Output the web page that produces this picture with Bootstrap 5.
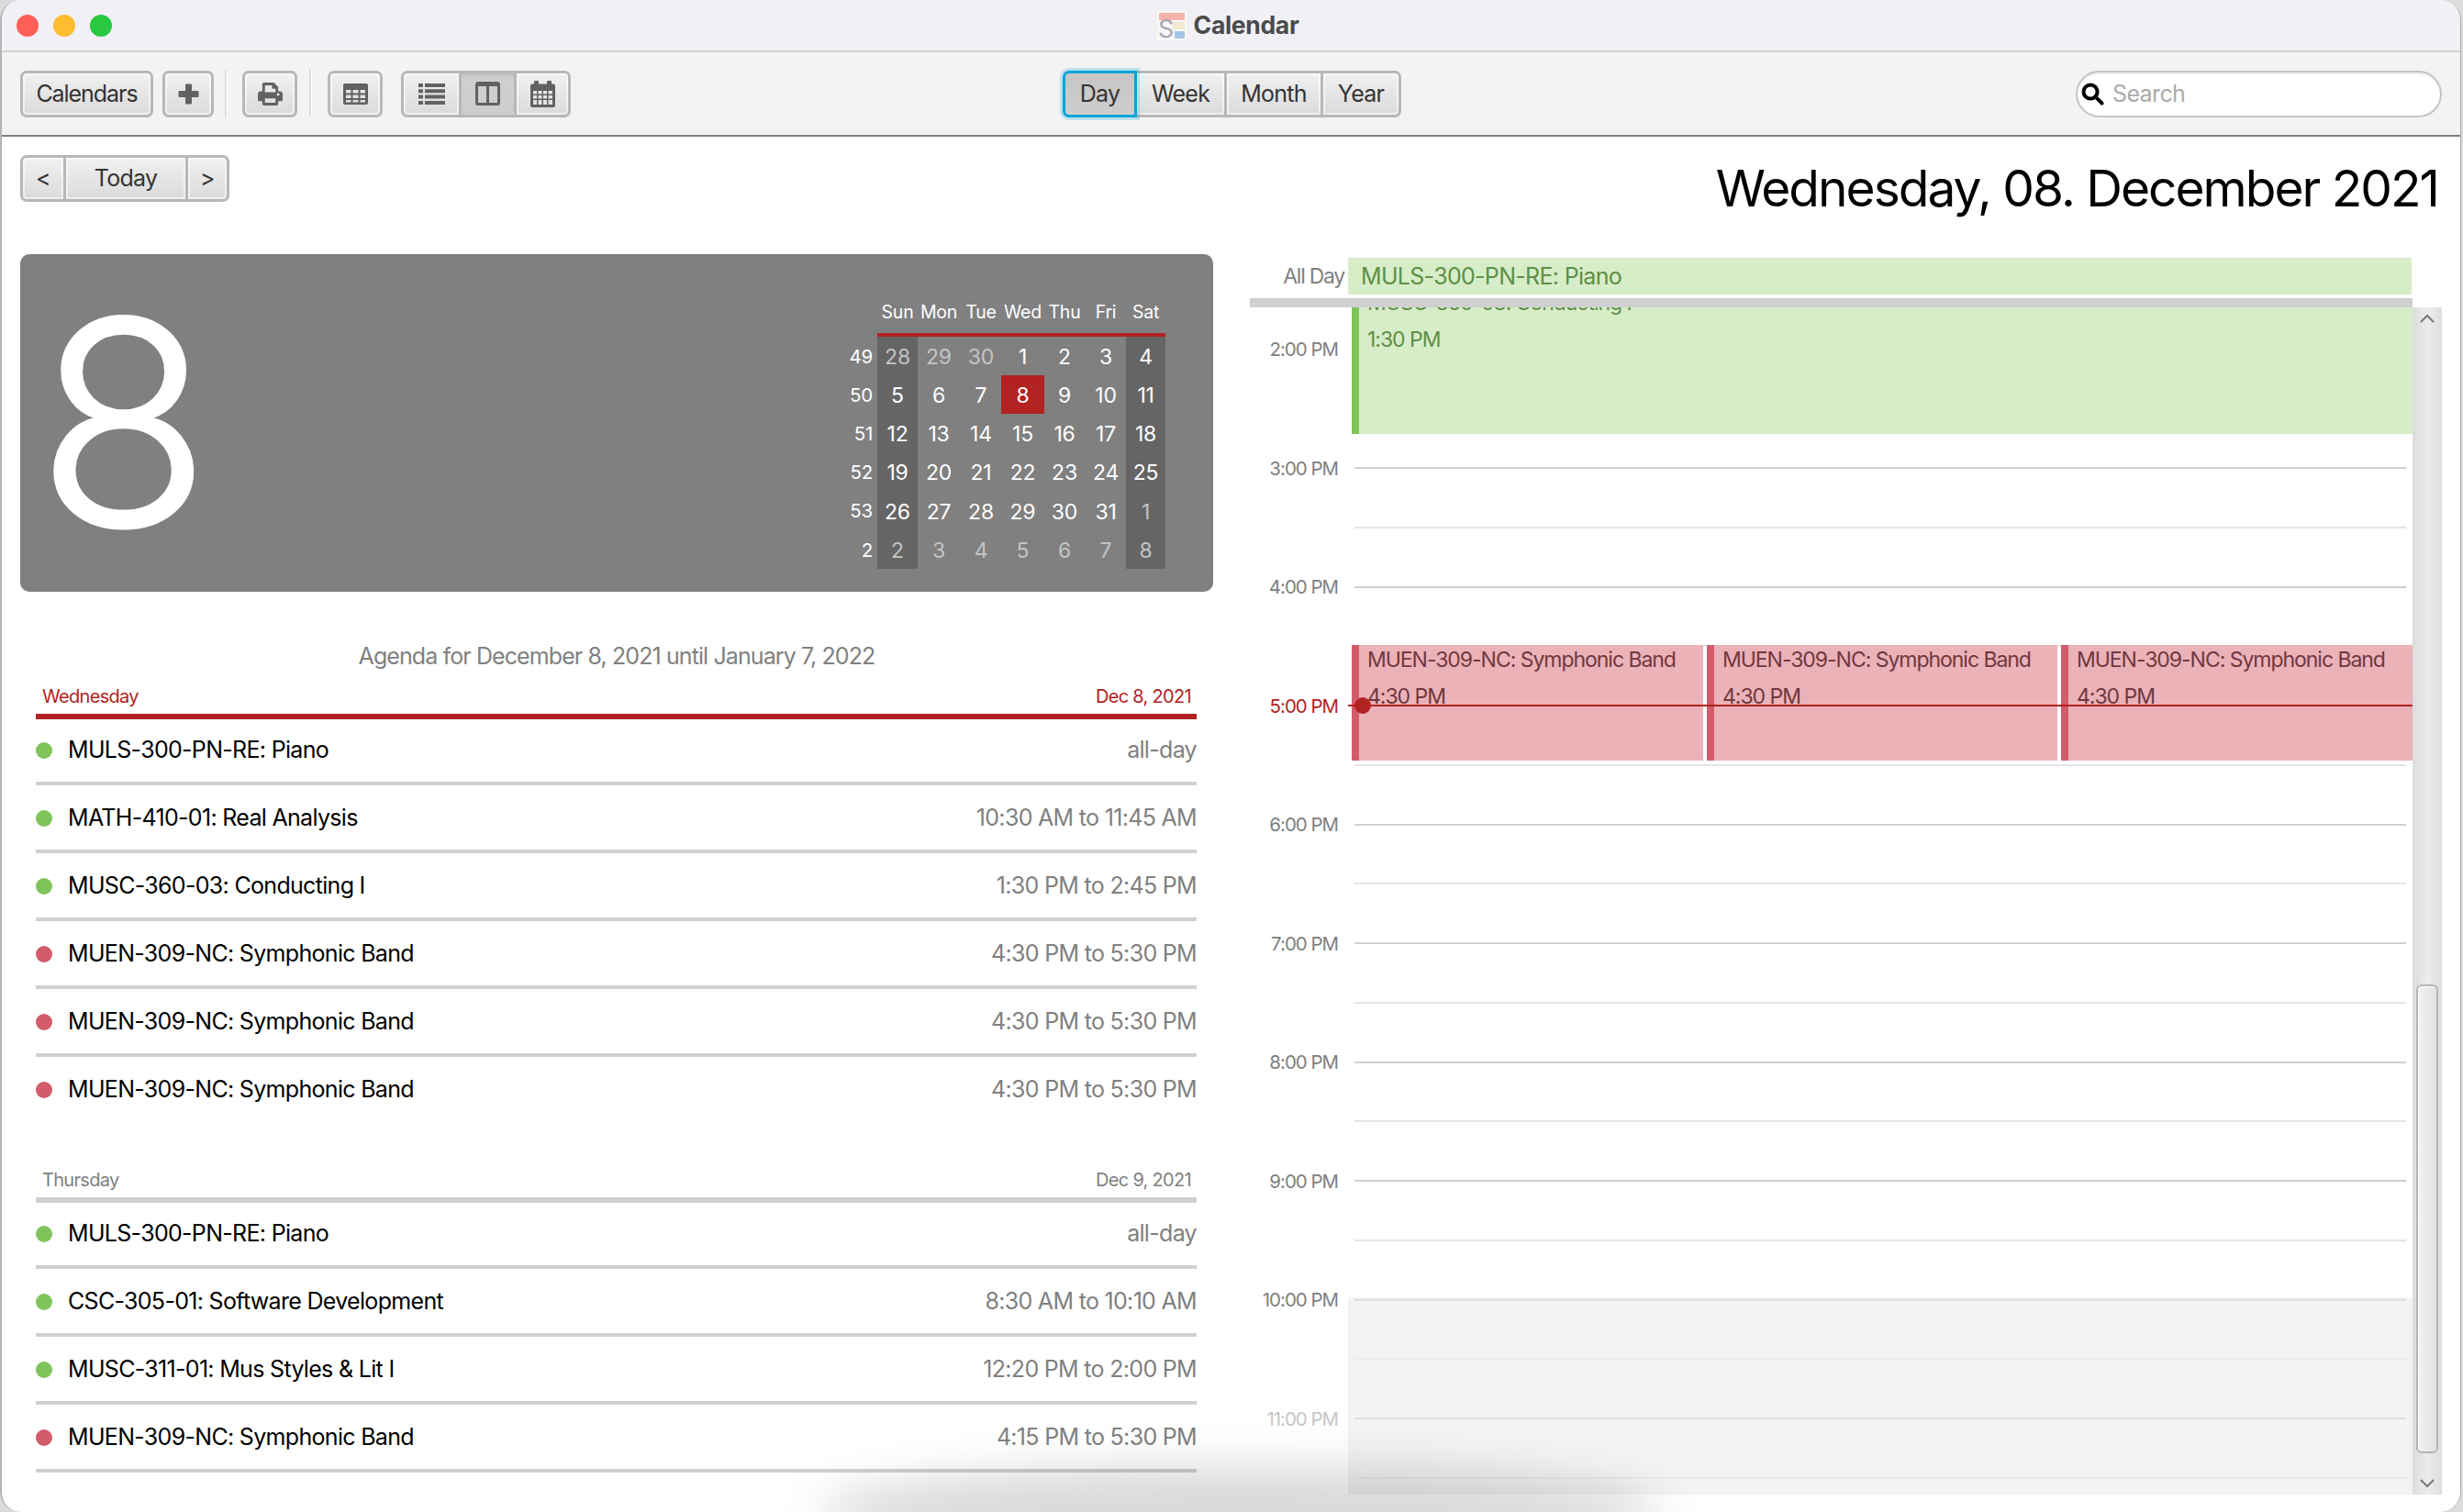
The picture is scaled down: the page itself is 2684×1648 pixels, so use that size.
<!DOCTYPE html>
<html lang="en">
<head>
  <meta charset="UTF-8" />
  <title>Calendar</title>
  <link href="https://cdn.jsdelivr.net/npm/bootstrap@5.3.3/dist/css/bootstrap.min.css" rel="stylesheet"/>
  <style>
    html, body { height: 100%; }
    body {
      background-color: #dcdcdc;
      font-family: Inter, "Liberation Sans", sans-serif;
      overflow: hidden;
      letter-spacing: -0.043em;
    }
    .app-window {
      height: 1648px;
      width: 2682px;
      background: #fff;
      border-left: 2px solid #b4b4b4;
      border-right: 1px solid #a8a8a8;
      border-radius: 22px;
      overflow: hidden;
      position: relative;
    }
    .title-bar {
      height: 57px;
      background: #f1f0f5;
      border-bottom: 2px solid #d0d0d0;
      padding-right: 7px;
      position: relative;
    }
    .traffic { width: 24px; height: 24px; border-radius: 50%; position: absolute; top: 16px; }
    .title-text { font-size: 26.5px; font-weight: 700; color: #4a4a4a; letter-spacing: -0.012em; }
    .tool-bar {
      height: 92px;
      background: #f3f3f3;
      border-bottom: 2px solid #808080;
      padding: 0 20px;
    }
    .side-area { flex: 1 1 0; }
    .view-group { margin-left: 2px; }
    .tb-btn {
      height: 51px;
      padding: 0;
      font-size: 25px;
      line-height: 1;
      color: #333;
      letter-spacing: -0.03em;
      border: 3px solid #b8b8b8;
      border-radius: 7px;
      background: linear-gradient(#f1f1f1, #dadada);
      box-shadow: inset 0 0 0 2px rgba(255,255,255,.55);
      display: inline-flex;
      align-items: center;
      justify-content: center;
    }
    .tb-btn:hover { color: #333; border-color: #b8b8b8; background: linear-gradient(#f1f1f1, #dadada); }
    .tb-btn.active {
      color: #333;
      border-color: #b8b8b8;
      background: linear-gradient(#bdbdbd, #cfcfcf 12%, #cdcdcd);
      box-shadow: none;
    }
    .btn-group { --bs-border-width: 3px; }
    .tb-sep { width: 2px; height: 52px; background: #dedede; box-shadow: 1px 0 0 #fff; }
    .tb-btn svg { fill: #616161; display: block; }
    .day-btn.active {
      border-color: #00a5d9 !important;
      background: linear-gradient(#c6c6c6, #cdcdcd);
      box-shadow: 0 0 0 3px rgba(0,165,217,.22);
      position: relative;
      z-index: 2;
    }
    .search-box { width: 399px; height: 51px; position: relative; }
    .search-input {
      width: 100%;
      height: 100%;
      border-radius: 26px;
      border: 2px solid #c6c6c6;
      padding: 0 0 0 38px;
      font-size: 25px;
      letter-spacing: -0.025em;
      box-shadow: inset 0 2px 2px rgba(0,0,0,.07);
    }
    .search-input::placeholder { color: #aaa; opacity: 1; }
    .search-icon { position: absolute; left: 6px; top: 13px; }
    .head-row { height: 128px; padding: 20px 24px 0 20px; }
    .head-title { font-size: 55px; line-height: 66px; color: #000; margin-top: 3px; letter-spacing: -0.036em; }
    .left-col { width: 1300px; margin-left: 20px; }
    .right-col { width: 1299px; margin-left: 40px; }

    .day-card {
      height: 368px;
      background: #808080;
      border-radius: 10px;
      color: #fff;
      padding: 46px 52px 0 0;
    }
    .big-day { font-size: 310px; font-weight: 300; -webkit-text-stroke: 3px #fff; line-height: 368px; margin: -46px 0 0 18px; letter-spacing: 0; }
    .mini-cal {
      display: grid;
      grid-template-columns: 51px 44px 46px 46px 45px 46px 44px 43px;
      grid-template-rows: 44px;
      grid-auto-rows: 42.2px;
      font-size: 23px;
      letter-spacing: -0.01em;
      text-align: center;
    }
    .mc-head { font-size: 19.5px; border-bottom: 4px solid #b22222; line-height: 34px; height: 44px; }
    .mc-blank { border: 0; }
    .mc-cell { display: flex; align-items: center; justify-content: center; padding-top: 2px; }
    .mc-wk { justify-content: flex-end; padding-right: 5px; font-size: 20.5px; }
    .mc-end { background: #656565; }
    .mc-off { color: #c4c4c4; }
    .mc-today { background: #b22222; margin: 0 -1px; }

    .agenda-title { font-size: 25px; letter-spacing: -0.036em; color: #808080; text-align: center; line-height: 30px; margin-top: 55px; height: 40px; }
    .agenda { padding: 0 18px 0 17px; }
    .day-head { height: 38px; font-size: 20px; padding: 0 6px 0 7px; }
    .day-head + .day-rule { height: 6px; margin-bottom: -2px; }
    .rule-red { background: #b22222; }
    .rule-grey { background: #d0d0d0; }
    .head-red { color: #b22222; }
    .head-grey { color: #808080; }
    .agenda-group + .agenda-group { margin-top: 45px; }
    .agenda-row {
      height: 74px;
      font-size: 25px;
      color: #000;
      border-bottom: 4px solid #d0d0d0;
      padding-top: 2px;
    }
    .agenda-row.no-rule { border-bottom: 0; height: 70px; }
    .agenda-dot { width: 18px; height: 18px; border-radius: 50%; margin-right: 17px; }
    .dot-green { background: #7ec45a; }
    .dot-red { background: #d25c6a; }
    .agenda-time { color: #808080; }

    .all-day-row { height: 48px; padding-top: 4px; }
    .all-day-label { width: 103px; font-size: 23px; letter-spacing: -0.055em; color: #808080; text-align: right; line-height: 40px; }
    .all-day-event {
      width: 1159px;
      margin-left: 4px;
      height: 40px;
      line-height: 41px;
      background: #d6edc7;
      color: #5e8f48;
      font-size: 25px;
      padding-left: 14px;
    }
    .all-day-bar { height: 10px; background: #d0d0d0; width: 1267px; }

    .time-wrap { height: 1294px; }
    .time-view { width: 1267px; position: relative; overflow: hidden; }
    .time-inner { padding-top: 44.5px; position: relative; }
    .off-hours { position: absolute; left: 107px; right: 0; top: 1079px; bottom: 0; background: #f3f3f3; }
    .slot { display: flex; height: 129.5px; position: relative; }
    .slot-label {
      width: 96px;
      text-align: right;
      font-size: 20.5px;
      letter-spacing: -0.05em;
      line-height: 22px;
      color: #808080;
      margin-top: -9.5px;
      flex: none;
    }
    .slot-lines { width: 1146px; margin-left: 18px; flex: none; }
    .slot-lines div { height: 50%; }
    .slot-lines .hr-line { border-top: 2px solid #d0d0d0; }
    .slot-lines .half-line { border-top: 2px solid #e5e5e5; }
    .label-now { color: #b22222; }
    .label-dim { color: #c6c6c6; }
    .slot-off .hr-line { border-top-color: #dedede; }
    .slot-off .half-line { border-top-color: #ebebeb; }

    .cal-event { position: absolute; font-size: 23px; letter-spacing: -0.045em; line-height: 40px; padding: 0 0 0 9px; overflow: hidden; white-space: nowrap; }
    .ev-text { margin-top: -4px; }
    .ev-green { background: #d6edc7; border-left: 8px solid #7ec45a; color: #5e8f48; top: -21px; left: 111px; right: 0; height: 159px; }
    .ev-red { background: #ebb2b8; border-left: 8px solid #d25c6a; color: #70373f; top: 368px; height: 126px; }
    .ev-a { left: 111px; width: 383px; }
    .ev-b { left: 498px; width: 382px; }
    .ev-c { left: 884px; width: 383px; }
    .now-line { position: absolute; left: 107px; right: 0; top: 433px; height: 2px; background: #b22222; }
    .now-dot { position: absolute; left: 114px; top: 425px; width: 18px; height: 18px; border-radius: 50%; background: #b22222; }

    .v-scroll {
      width: 32px;
      background: linear-gradient(90deg, #dcdcdc, #ececec 50%, #dedede);
      position: relative;
    }
    .v-thumb {
      position: absolute;
      left: 4px;
      width: 24px;
      top: 738px;
      height: 511px;
      border: 2px solid #b4b4b4;
      border-radius: 6px;
      background: linear-gradient(90deg, #f2f2f2, #e2e2e2);
      box-shadow: inset 1px 1px 0 #fff;
    }
    .v-arrow { position: absolute; left: 8px; }
    .bottom-shade {
      position: absolute;
      left: 890px;
      width: 920px;
      bottom: -50px;
      height: 100px;
      border-radius: 50%;
      background: rgba(0,0,0,.15);
      filter: blur(24px);
    }
  </style>
</head>
<body>
  <div class="app-window d-flex flex-column">
    <div class="title-bar d-flex align-items-center justify-content-center gap-2">
      <span class="traffic" style="left:16px;background:#ff5f57"></span>
      <span class="traffic" style="left:56px;background:#febc2e"></span>
      <span class="traffic" style="left:96px;background:#28c840"></span>
      <svg width="32" height="32" viewBox="0 0 32 32" overflow="visible">
        <rect width="32" height="32" fill="#f8f8f8"/>
        <rect x="2" y="2" width="28" height="8" fill="#f7b3ab"/>
        <rect x="17" y="12" width="13" height="8" fill="#efe9cf"/>
        <rect x="19" y="22" width="11" height="8" fill="#a3c6e6"/>
        <text x="1" y="29" font-size="27" font-family="Inter, sans-serif" fill="#a8a7b3">S</text>
      </svg>
      <span class="title-text">Calendar</span>
    </div>

    <div class="tool-bar d-flex align-items-center">
      <div class="side-area d-flex align-items-center">
        <button class="btn tb-btn" style="width:145px;letter-spacing:-0.042em">Calendars</button>
        <button class="btn tb-btn" style="width:56px;margin-left:10px">
          <svg width="23" height="23" viewBox="0 0 23 23"><path d="M8 1.500a1 1 0 0 1 1-1h5a1 1 0 0 1 1 1V8h6.500a1 1 0 0 1 1 1v5a1 1 0 0 1-1 1H15v6.500a1 1 0 0 1-1 1H9a1 1 0 0 1-1-1V15H1.500a1 1 0 0 1-1-1V9a1 1 0 0 1 1-1H8z"/></svg>
        </button>
        <span class="tb-sep" style="margin:0 17px 0 12px"></span>
        <button class="btn tb-btn" style="width:60px">
          <svg width="27" height="25" viewBox="0 0 28 26"><path fill-rule="evenodd" d="M5 2a2 2 0 0 1 2-2h11l5 5v5h1.500A3.500 3.500 0 0 1 28 13.500V20a1 1 0 0 1-1 1h-4v3a2 2 0 0 1-2 2H7a2 2 0 0 1-2-2v-3H1a1 1 0 0 1-1-1v-6.500A3.500 3.500 0 0 1 3.500 10H5zm3 1v8h12V7h-3a1 1 0 0 1-1-1V3zm0 15v5h12v-5zm15-6a1.500 1.500 0 1 0 0 3 1.500 1.500 0 0 0 0-3z"/></svg>
        </button>
        <span class="tb-sep" style="margin:0 18px 0 13px"></span>
        <button class="btn tb-btn" style="width:60px">
          <svg width="27" height="23" viewBox="0 0 27 23"><path fill-rule="evenodd" d="M2 0h23a2 2 0 0 1 2 2v19a2 2 0 0 1-2 2H2a2 2 0 0 1-2-2V2a2 2 0 0 1 2-2zm1 7v3.500h5.500V7zm7.500 0v3.500h6V7zm8 0v3.500H24V7zM3 12.500V16h5.500v-3.500zm7.500 0V16h6v-3.500zm8 0V16H24v-3.500zM3 18v2.500h5.500V18zm7.500 0v2.500h6V18zm8 0v2.500H24V18z"/></svg>
        </button>
        <div class="btn-group" style="margin-left:20px">
          <button class="btn tb-btn" style="width:66px">
            <svg width="29" height="23" viewBox="0 0 29 23"><path d="M0 0h5v4H0zM7 0h22v4H7zM0 6.300h5v4H0zM7 6.300h22v4H7zM0 12.600h5v4H0zM7 12.600h22v4H7zM0 19h5v4H0zM7 19h22v4H7z"/></svg>
          </button>
          <button class="btn tb-btn active" style="width:63px">
            <svg width="27" height="26" viewBox="0 0 27 26"><path fill-rule="evenodd" d="M3 0h21a3 3 0 0 1 3 3v20a3 3 0 0 1-3 3H3a3 3 0 0 1-3-3V3a3 3 0 0 1 3-3zm0 5v17.500a.500.500 0 0 0 .5.500H12V5zm12 0v18h8.500a.500.500 0 0 0 .5-.5V5z"/></svg>
          </button>
          <button class="btn tb-btn" style="width:62px">
            <svg width="27" height="29" viewBox="0 0 27 29"><path fill-rule="evenodd" d="M5 0h3a1 1 0 0 1 1 1v2.500h9V1a1 1 0 0 1 1-1h3a1 1 0 0 1 1 1v2.500h2a2 2 0 0 1 2 2V27a2 2 0 0 1-2 2H2a2 2 0 0 1-2-2V5.500a2 2 0 0 1 2-2h2V1a1 1 0 0 1 1-1zM3 11v3.500h4V11zm5.500 0v3.500h4V11zm5.500 0v3.500h4V11zm5.500 0v3.500H24V11zM3 16v3.500h4V16zm5.500 0v3.500h4V16zm5.500 0v3.500h4V16zm5.500 0v3.500H24V16zM3 21v5h4v-5zm5.500 0v5h4v-5zm5.500 0v5h4v-5zm5.500 0v5H24v-5z"/></svg>
          </button>
        </div>
      </div>

      <div class="btn-group view-group">
        <button class="btn tb-btn day-btn active" style="width:81px">Day</button>
        <button class="btn tb-btn" style="width:101px">Week</button>
        <button class="btn tb-btn" style="width:108px">Month</button>
        <button class="btn tb-btn" style="width:88px">Year</button>
      </div>

      <div class="side-area d-flex justify-content-end">
        <div class="search-box">
          <input class="form-control search-input" type="text" placeholder="Search"/>
          <svg class="search-icon" width="25" height="25" viewBox="0 0 25 25" fill="none" stroke="#000"><circle cx="10" cy="10" r="7.500" stroke-width="4"/><path d="M15.500 15.500l7 7" stroke-width="4" stroke-linecap="round"/></svg>
        </div>
      </div>
    </div>

    <div class="head-row d-flex justify-content-between">
      <div class="btn-group align-self-start">
        <button class="btn tb-btn" style="width:50px">&lt;</button>
        <button class="btn tb-btn" style="width:136px">Today</button>
        <button class="btn tb-btn" style="width:48px">&gt;</button>
      </div>
      <div class="head-title">Wednesday, 08. December 2021</div>
    </div>

    <div class="d-flex">
      <div class="left-col">
        <div class="day-card d-flex justify-content-between">
          <div class="big-day">8</div>
          <div class="mini-cal">
            <div class="mc-head mc-blank"></div>
            <div class="mc-head">Sun</div><div class="mc-head">Mon</div><div class="mc-head">Tue</div><div class="mc-head">Wed</div><div class="mc-head">Thu</div><div class="mc-head">Fri</div><div class="mc-head">Sat</div>

            <div class="mc-cell mc-wk">49</div><div class="mc-cell mc-end mc-off">28</div><div class="mc-cell mc-off">29</div><div class="mc-cell mc-off">30</div><div class="mc-cell">1</div><div class="mc-cell">2</div><div class="mc-cell">3</div><div class="mc-cell mc-end">4</div>
            <div class="mc-cell mc-wk">50</div><div class="mc-cell mc-end">5</div><div class="mc-cell">6</div><div class="mc-cell">7</div><div class="mc-cell mc-today">8</div><div class="mc-cell">9</div><div class="mc-cell">10</div><div class="mc-cell mc-end">11</div>
            <div class="mc-cell mc-wk">51</div><div class="mc-cell mc-end">12</div><div class="mc-cell">13</div><div class="mc-cell">14</div><div class="mc-cell">15</div><div class="mc-cell">16</div><div class="mc-cell">17</div><div class="mc-cell mc-end">18</div>
            <div class="mc-cell mc-wk">52</div><div class="mc-cell mc-end">19</div><div class="mc-cell">20</div><div class="mc-cell">21</div><div class="mc-cell">22</div><div class="mc-cell">23</div><div class="mc-cell">24</div><div class="mc-cell mc-end">25</div>
            <div class="mc-cell mc-wk">53</div><div class="mc-cell mc-end">26</div><div class="mc-cell">27</div><div class="mc-cell">28</div><div class="mc-cell">29</div><div class="mc-cell">30</div><div class="mc-cell">31</div><div class="mc-cell mc-end mc-off">1</div>
            <div class="mc-cell mc-wk">2</div><div class="mc-cell mc-end mc-off">2</div><div class="mc-cell mc-off">3</div><div class="mc-cell mc-off">4</div><div class="mc-cell mc-off">5</div><div class="mc-cell mc-off">6</div><div class="mc-cell mc-off">7</div><div class="mc-cell mc-end mc-off">8</div>
          </div>
        </div>

        <div class="agenda-title">Agenda for December 8, 2021 until January 7, 2022</div>
        <div class="agenda">
          <div class="agenda-group">
            <div class="day-head head-red d-flex justify-content-between align-items-center"><span>Wednesday</span><span>Dec 8, 2021</span></div>
            <div class="day-rule rule-red"></div>
            <div class="agenda-row d-flex align-items-center"><span class="agenda-dot dot-green"></span><span class="flex-grow-1">MULS-300-PN-RE: Piano</span><span class="agenda-time">all-day</span></div>
            <div class="agenda-row d-flex align-items-center"><span class="agenda-dot dot-green"></span><span class="flex-grow-1">MATH-410-01: Real Analysis</span><span class="agenda-time">10:30 AM to 11:45 AM</span></div>
            <div class="agenda-row d-flex align-items-center"><span class="agenda-dot dot-green"></span><span class="flex-grow-1">MUSC-360-03: Conducting I</span><span class="agenda-time">1:30 PM to 2:45 PM</span></div>
            <div class="agenda-row d-flex align-items-center"><span class="agenda-dot dot-red"></span><span class="flex-grow-1">MUEN-309-NC: Symphonic Band</span><span class="agenda-time">4:30 PM to 5:30 PM</span></div>
            <div class="agenda-row d-flex align-items-center"><span class="agenda-dot dot-red"></span><span class="flex-grow-1">MUEN-309-NC: Symphonic Band</span><span class="agenda-time">4:30 PM to 5:30 PM</span></div>
            <div class="agenda-row no-rule d-flex align-items-center"><span class="agenda-dot dot-red"></span><span class="flex-grow-1">MUEN-309-NC: Symphonic Band</span><span class="agenda-time">4:30 PM to 5:30 PM</span></div>
          </div>
          <div class="agenda-group">
            <div class="day-head head-grey d-flex justify-content-between align-items-center"><span>Thursday</span><span>Dec 9, 2021</span></div>
            <div class="day-rule rule-grey"></div>
            <div class="agenda-row d-flex align-items-center"><span class="agenda-dot dot-green"></span><span class="flex-grow-1">MULS-300-PN-RE: Piano</span><span class="agenda-time">all-day</span></div>
            <div class="agenda-row d-flex align-items-center"><span class="agenda-dot dot-green"></span><span class="flex-grow-1">CSC-305-01: Software Development</span><span class="agenda-time">8:30 AM to 10:10 AM</span></div>
            <div class="agenda-row d-flex align-items-center"><span class="agenda-dot dot-green"></span><span class="flex-grow-1">MUSC-311-01: Mus Styles &amp; Lit I</span><span class="agenda-time">12:20 PM to 2:00 PM</span></div>
            <div class="agenda-row d-flex align-items-center"><span class="agenda-dot dot-red"></span><span class="flex-grow-1">MUEN-309-NC: Symphonic Band</span><span class="agenda-time">4:15 PM to 5:30 PM</span></div>
          </div>
        </div>
      </div>

      <div class="right-col">
        <div class="all-day-row d-flex">
          <div class="all-day-label">All Day</div>
          <div class="all-day-event">MULS-300-PN-RE: Piano</div>
        </div>
        <div class="all-day-bar"></div>
        <div class="time-wrap d-flex">
          <div class="time-view">
            <div class="off-hours"></div>
            <div class="time-inner">
              <div class="slot"><div class="slot-label">2:00 PM</div><div class="slot-lines"><div class="hr-line"></div><div class="half-line"></div></div></div>
              <div class="slot"><div class="slot-label">3:00 PM</div><div class="slot-lines"><div class="hr-line"></div><div class="half-line"></div></div></div>
              <div class="slot"><div class="slot-label">4:00 PM</div><div class="slot-lines"><div class="hr-line"></div><div class="half-line"></div></div></div>
              <div class="slot"><div class="slot-label label-now">5:00 PM</div><div class="slot-lines"><div class="hr-line"></div><div class="half-line"></div></div></div>
              <div class="slot"><div class="slot-label">6:00 PM</div><div class="slot-lines"><div class="hr-line"></div><div class="half-line"></div></div></div>
              <div class="slot"><div class="slot-label">7:00 PM</div><div class="slot-lines"><div class="hr-line"></div><div class="half-line"></div></div></div>
              <div class="slot"><div class="slot-label">8:00 PM</div><div class="slot-lines"><div class="hr-line"></div><div class="half-line"></div></div></div>
              <div class="slot"><div class="slot-label">9:00 PM</div><div class="slot-lines"><div class="hr-line"></div><div class="half-line"></div></div></div>
              <div class="slot slot-off"><div class="slot-label">10:00 PM</div><div class="slot-lines"><div class="hr-line"></div><div class="half-line"></div></div></div>
              <div class="slot slot-off"><div class="slot-label label-dim">11:00 PM</div><div class="slot-lines"><div class="hr-line"></div><div class="half-line"></div></div></div>
            </div>
            <div class="cal-event ev-green"><div class="ev-text">MUSC-360-03: Conducting I<br/>1:30 PM</div></div>
            <div class="cal-event ev-red ev-a"><div class="ev-text">MUEN-309-NC: Symphonic Band<br/>4:30 PM</div></div>
            <div class="cal-event ev-red ev-b"><div class="ev-text">MUEN-309-NC: Symphonic Band<br/>4:30 PM</div></div>
            <div class="cal-event ev-red ev-c"><div class="ev-text">MUEN-309-NC: Symphonic Band<br/>4:30 PM</div></div>
            <div class="now-line"></div>
            <div class="now-dot"></div>
          </div>
          <div class="v-scroll">
            <svg class="v-arrow" style="top:6px" width="16" height="12" viewBox="0 0 16 12" fill="none" stroke="#777" stroke-width="2"><path d="M1 10l7-7 7 7"/></svg>
            <div class="v-thumb"></div>
            <svg class="v-arrow" style="bottom:6px" width="16" height="12" viewBox="0 0 16 12" fill="none" stroke="#777" stroke-width="2"><path d="M1 2l7 7 7-7"/></svg>
          </div>
        </div>
      </div>
    </div>
    <div class="bottom-shade"></div>
  </div>
  <script src="https://cdn.jsdelivr.net/npm/bootstrap@5.3.3/dist/js/bootstrap.bundle.min.js"></script>
</body>
</html>
